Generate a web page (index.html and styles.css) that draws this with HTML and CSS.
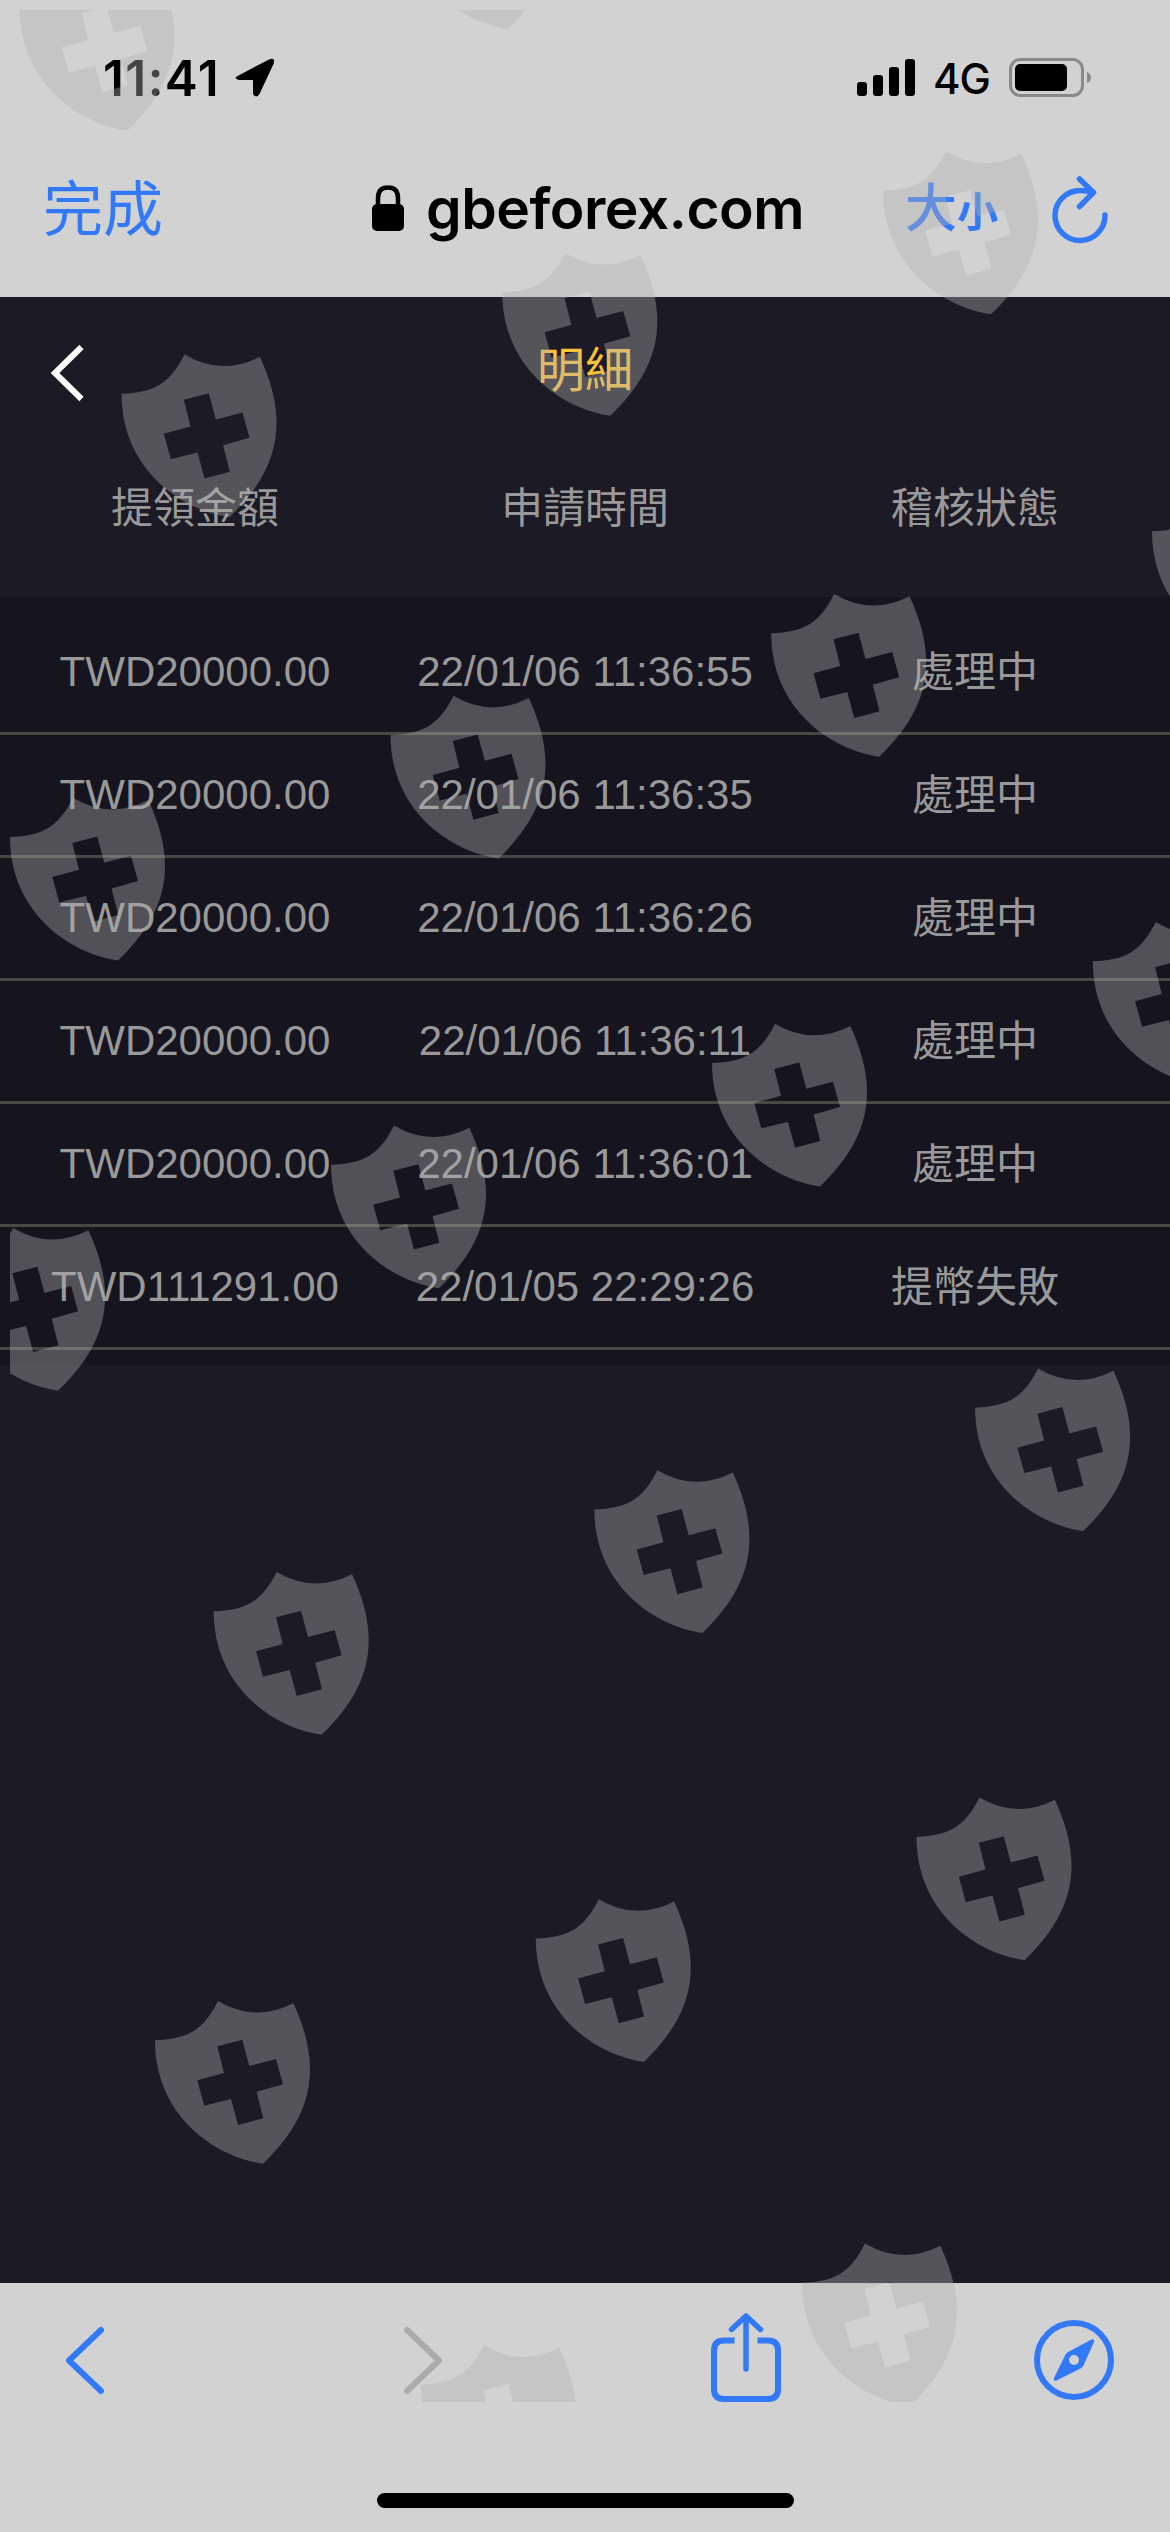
FILE: index.html
```html
<!DOCTYPE html>
<html lang="zh-Hant">
<head>
<meta charset="utf-8">
<title>明細</title>
<link rel="stylesheet" href="styles.css">
</head>
<body>
<div class="screen">
  <header class="browser-top">
    <div class="status-bar">
      <div class="status-left">
        <span class="clock">11:41</span>
        <svg class="location" width="40" height="40" viewBox="0 0 40 40"><path d="M3.500 17.500 34 1.500Q40.500-1 38.700 5.500L24.500 36Q21 41 18 36V22H4Q-2.500 20.500 3.500 17.500Z"/></svg>
      </div>
      <div class="status-right">
        <svg width="59" height="38" viewBox="0 0 59 38"><rect y="23" width="10" height="14" rx="3"/><rect x="16" y="16" width="10" height="21" rx="3"/><rect x="32" y="8" width="10" height="29" rx="3"/><rect x="48" width="10" height="37" rx="3"/></svg>
        <span class="network">4G</span>
        <svg class="battery" width="83" height="40" viewBox="0 0 83 40"><rect x="1.500" y="1.500" width="72" height="36" rx="10" fill="none" stroke="#898989" stroke-width="3"/><rect x="6" y="6" width="52" height="27" rx="5"/><path d="M78 14Q82 15.500 82 19.500T78 25Z" fill="#898989"/></svg>
      </div>
    </div>
    <div class="address-bar">
      <span class="done">完成</span>
      <div class="site">
        <svg width="32" height="47" viewBox="0 0 32 47"><path d="M6 24V13Q6 2.500 16 2.500T26 13V24" fill="none" stroke="#000" stroke-width="4.500"/><rect y="19" width="32" height="27" rx="5"/></svg>
        <span class="domain">gbeforex.com</span>
      </div>
      <div class="page-tools">
        <span class="text-size"><span class="big">大</span><span class="small">小</span></span>
        <svg class="reload" width="58" height="70" viewBox="0 0 58 70"><path d="M42.500 16.500Q36 14.500 29 14.500A25 25 0 1 0 54 39M28.500 3 42.500 16.500 28.500 30.500" fill="none" stroke="#3279f7" stroke-width="5.500" stroke-linecap="round" stroke-linejoin="round"/></svg>
      </div>
    </div>
  </header>

  <main class="page">
    <div class="title-bar">
      <svg class="back" width="36" height="58" viewBox="0 0 36 58"><path d="M31.500 3 5 29 31.500 55" fill="none" stroke="#fff" stroke-width="6"/></svg>
      <h1 class="title">明細</h1>
    </div>
    <div class="columns heading"><span>提領金額</span><span>申請時間</span><span>稽核狀態</span></div>
    <div class="records">
      <div class="columns record"><span>TWD20000.00</span><span>22/01/06 11:36:55</span><span class="state">處理中</span></div>
      <div class="columns record"><span>TWD20000.00</span><span>22/01/06 11:36:35</span><span class="state">處理中</span></div>
      <div class="columns record"><span>TWD20000.00</span><span>22/01/06 11:36:26</span><span class="state">處理中</span></div>
      <div class="columns record"><span>TWD20000.00</span><span>22/01/06 11:36:11</span><span class="state">處理中</span></div>
      <div class="columns record"><span>TWD20000.00</span><span>22/01/06 11:36:01</span><span class="state">處理中</span></div>
      <div class="columns record"><span>TWD111291.00</span><span>22/01/05 22:29:26</span><span class="state">提幣失敗</span></div>
    </div>
  </main>

  <footer class="browser-bottom">
    <div class="toolbar">
      <svg width="44" height="92" viewBox="0 0 44 92"><path d="M38 16 6 46.500 38 77" fill="none" stroke="#3279f7" stroke-width="6" stroke-linecap="round" stroke-linejoin="round"/></svg>
      <svg class="forward" width="44" height="92" viewBox="0 0 44 92"><path d="M6 16 38 46.500 6 77" fill="none" stroke="#ababab" stroke-width="6" stroke-linecap="round" stroke-linejoin="round"/></svg>
      <svg class="share" width="70" height="92" viewBox="0 0 70 92"><path d="M23.500 26.500H13Q3 26.500 3 36.500V75Q3 85 13 85H57Q67 85 67 75V36.500Q67 26.500 57 26.500H46.500" fill="none" stroke="#3279f7" stroke-width="6"/><path d="M35 55V2.500M20.500 15.500 35 2 49.500 15.500" fill="none" stroke="#3279f7" stroke-width="5.500" stroke-linecap="round" stroke-linejoin="round"/></svg>
      <svg class="compass" width="80" height="92" viewBox="0 0 80 92"><circle cx="40" cy="46" r="37" fill="none" stroke="#3279f7" stroke-width="6"/><path fill="#3279f7" fill-rule="evenodd" d="M57.500 25.500Q61 24.500 60 28L49.500 51.500Q48.500 53.500 46.500 54.500L22.500 66.500Q19 67.500 20 64L31 41.500Q32 39 34 38ZM40 41A5 5 0 1 0 40 51A5 5 0 1 0 40 41Z"/></svg>
    </div>
    <div class="home-indicator"></div>
  </footer>

  <svg class="watermark" width="1170" height="2532" viewBox="0 0 1170 2532">
    <defs>
      <clipPath id="area"><rect x="10" y="10" width="1160" height="2392"/></clipPath>
      <path id="shield" fill-rule="evenodd" d="M0 39.300C32 38 48 30 63 0Q100 22 138.300 2.300C148 23 155 46 155 68C155 102 140 132 108 162.700C60 156 0 115 0 39.300ZM62.300 45.300 69 72 42.300 79.300 49.300 104.700 76 98 83 124 108.300 117.300 101.600 90.700 128 83.300 121 58 94.300 65 87.300 38.700Z"/>
    </defs>
    <g clip-path="url(#area)" fill="#b3b3b3" fill-opacity=".39">
      <use href="#shield" x="19.400" y="-32"/><use href="#shield" x="400" y="-134"/>
      <use href="#shield" x="121.500" y="354.500"/><use href="#shield" x="502.300" y="253"/><use href="#shield" x="883" y="151.500"/>
      <use href="#shield" x="10" y="797.800"/><use href="#shield" x="390.500" y="695.800"/><use href="#shield" x="771.200" y="594"/><use href="#shield" x="1152" y="492"/>
      <use href="#shield" x="-49.900" y="1228"/><use href="#shield" x="331" y="1125.500"/><use href="#shield" x="712" y="1023.700"/><use href="#shield" x="1092.800" y="922"/>
      <use href="#shield" x="213.700" y="1572"/><use href="#shield" x="594.400" y="1470.200"/><use href="#shield" x="975.100" y="1368.400"/>
      <use href="#shield" x="155" y="2001"/><use href="#shield" x="535.800" y="1899.200"/><use href="#shield" x="916.500" y="1797.500"/>
      <use href="#shield" x="421" y="2345.300"/><use href="#shield" x="802" y="2243.500"/>
    </g>
  </svg>
</div>
</body>
</html>
```
FILE: styles.css
```css
* { box-sizing: border-box; }

body {
  margin: 0;
  font-family: "Liberation Sans", "Noto Sans CJK TC", sans-serif;
}

svg { display: block; flex: none; overflow: visible; }

.screen {
  position: relative;
  width: 1170px;
  height: 2532px;
  display: flex;
  flex-direction: column;
  overflow: hidden;
  background: #1c1a24;
}

.browser-top {
  height: 297px;
  background: #d2d2d2;
}

.status-bar {
  height: 156px;
  padding: 0 78px 0 103px;
  display: flex;
  justify-content: space-between;
  align-items: center;
  font-family: Inter, sans-serif;
}

.status-left, .status-right { display: flex; align-items: center; }
.clock { font-size: 49.500px; font-weight: 600; line-height: 60px; letter-spacing: 1.400px; }
.location { margin-left: 15px; }
.network { margin-left: 17px; font-size: 42px; font-weight: 500; line-height: 50px; letter-spacing: -1px; padding-top: 2px; }
.battery { margin-left: 19px; }

.address-bar {
  height: 104px;
  padding: 0 61px 0 43px;
  display: grid;
  grid-template-columns: 300px 1fr 300px;
  align-items: center;
}

.done { padding-top: 5px; font-size: 60px; line-height: 80px; color: #3279f7; }

.site { display: flex; align-items: center; gap: 22px; margin-left: 29px; }
.domain { padding-top: 2px; font: 600 57px/70px Inter, sans-serif; letter-spacing: -0.500px; }

.page-tools { display: flex; align-items: center; justify-content: flex-end; padding-top: 5px; }
.text-size { display: flex; align-items: baseline; color: #3279f7; font-weight: 500; line-height: 60px; }
.big { font-size: 52px; }
.small { font-size: 41px; font-weight: 700; }
.reload { margin-left: 53px; }

.page { flex: 1; }

.title-bar {
  height: 146px;
  padding: 0 50px;
  display: grid;
  grid-template-columns: 36px 1fr 36px;
  align-items: center;
}

.back { margin-top: 6px; }

.title {
  margin: 0;
  padding-bottom: 8px;
  text-align: center;
  font-size: 48px;
  font-weight: 400;
  color: #f9c23c;
}

.columns {
  display: grid;
  grid-template-columns: repeat(3, 1fr);
  align-items: center;
  text-align: center;
  font-size: 42px;
  line-height: 60px;
  color: #999;
}

.heading { height: 154px; padding-bottom: 22px; }

.records { padding: 15px 0; background: #16141e; }
.record { height: 123px; border-bottom: 3px solid #484745; }
.state { padding-top: 2px; }

.browser-bottom {
  height: 249px;
  display: flex;
  flex-direction: column;
  align-items: center;
  background: #d2d2d2;
}

.toolbar {
  width: 100%;
  height: 210px;
  padding: 31px 0 0 63px;
  display: flex;
}

.forward { margin-left: 294px; }
.share { margin-left: 265.500px; }
.compass { margin-left: 253.500px; }

.home-indicator { width: 417px; height: 15px; border-radius: 8px; background: #000; }

.watermark { position: absolute; left: 0; top: 0; pointer-events: none; }
```
